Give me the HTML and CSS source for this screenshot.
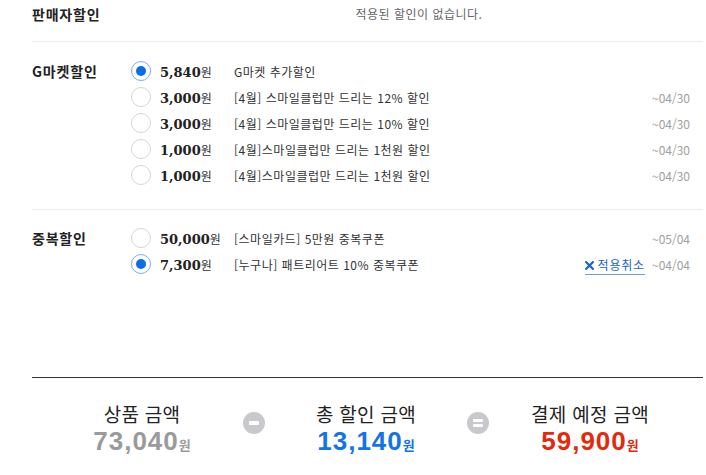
FILE: index.html
```html
<!DOCTYPE html>
<html lang="ko">
<head>
<meta charset="utf-8">
<link rel="stylesheet" href="styles.css">
</head>
<body>
<div class="page">
  <section class="sec head">
    <h2 class="sec-title">판매자할인</h2>
    <p class="empty">적용된 할인이 없습니다.</p>
  </section>

  <section class="sec group">
    <h2 class="sec-title row-title">G마켓할인</h2>
    <ul class="opts">
      <li class="opt"><span class="radio on"></span><span class="amt"><b>5,840</b>원</span><span class="desc">G마켓 추가할인</span></li>
      <li class="opt"><span class="radio"></span><span class="amt"><b>3,000</b>원</span><span class="desc">[4월] 스마일클럽만 드리는 12% 할인</span><span class="date">~04/30</span></li>
      <li class="opt"><span class="radio"></span><span class="amt"><b>3,000</b>원</span><span class="desc">[4월] 스마일클럽만 드리는 10% 할인</span><span class="date">~04/30</span></li>
      <li class="opt"><span class="radio"></span><span class="amt"><b>1,000</b>원</span><span class="desc">[4월]스마일클럽만 드리는 1천원 할인</span><span class="date">~04/30</span></li>
      <li class="opt"><span class="radio"></span><span class="amt"><b>1,000</b>원</span><span class="desc">[4월]스마일클럽만 드리는 1천원 할인</span><span class="date">~04/30</span></li>
    </ul>
  </section>

  <section class="sec group last">
    <h2 class="sec-title row-title">중복할인</h2>
    <ul class="opts">
      <li class="opt"><span class="radio"></span><span class="amt"><b>50,000</b>원</span><span class="desc">[스마일카드] 5만원 중복쿠폰</span><span class="date">~05/04</span></li>
      <li class="opt"><span class="radio on"></span><span class="amt"><b>7,300</b>원</span><span class="desc">[누구나] 패트리어트 10% 중복쿠폰</span><a class="cancel" href="#"><svg class="x" width="9" height="9" viewBox="0 0 9 9"><path d="M1.2 1.2 L7.8 7.8 M7.8 1.2 L1.2 7.8" stroke="#1763cf" stroke-width="2.2" stroke-linecap="square"/></svg>적용취소</a><span class="date">~04/04</span></li>
    </ul>
  </section>

  <section class="summary">
    <div class="sum-item">
      <div class="sum-label">상품 금액</div>
      <div class="sum-val gray">73,040<small>원</small></div>
    </div>
    <span class="sign minus"></span>
    <div class="sum-item">
      <div class="sum-label">총 할인 금액</div>
      <div class="sum-val blue">13,140<small>원</small></div>
    </div>
    <span class="sign equals"></span>
    <div class="sum-item">
      <div class="sum-label">결제 예정 금액</div>
      <div class="sum-val red">59,900<small>원</small></div>
    </div>
  </section>
</div>
</body>
</html>
```

FILE: styles.css
```css
* { box-sizing: border-box; }

body {
  margin: 0;
  background: #fff;
  font-family: "Noto Sans CJK KR", "Noto Sans", sans-serif;
  color: #333;
}

.page {
  margin-left: 32px;
  width: 671px;
}

.sec {
  display: grid;
  grid-template-columns: 99px 1fr;
  border-bottom: 1px solid #ececec;
}

.head {
  height: 42px;
  align-items: start;
}

.sec-title {
  margin: 0;
  font-size: 14px;
  font-weight: 700;
  line-height: 28px;
  color: #222;
  letter-spacing: 0.8px;
}

.empty {
  margin: 0;
  text-align: center;
  font-size: 12px;
  line-height: 28px;
  color: #666;
  letter-spacing: 0.5px;
  padding-left: 4px;
}

.group {
  padding: 16px 0 21px;
}

.group.last {
  border-bottom: none;
  padding: 15px 0 100px;
}

.row-title {
  line-height: 26px;
}

.opts {
  list-style: none;
  margin: 0;
  padding: 0;
}

.opt {
  display: flex;
  align-items: center;
  height: 26px;
  padding-right: 13px;
}

.radio {
  flex: none;
  width: 20px;
  height: 20px;
  border-radius: 50%;
  border: 1px solid #d6d6d6;
  margin-right: 9px;
  display: flex;
  align-items: center;
  justify-content: center;
}

.radio.on {
  border-color: #80abe6;
}

.radio.on::after {
  content: "";
  width: 10px;
  height: 10px;
  border-radius: 50%;
  background: #0a6de6;
}

.amt {
  flex: none;
  width: 74px;
  font-size: 12px;
  color: #333;
}

.amt b {
  font-family: "DejaVu Serif", serif;
  font-size: 13px;
  font-weight: 700;
  color: #222;
}

.desc {
  flex: 1;
  font-size: 12px;
  color: #333;
  letter-spacing: 0.5px;
}

.date {
  font-size: 12px;
  color: #a0a0a0;
}

.cancel {
  display: flex;
  align-items: center;
  gap: 4px;
  margin-right: 7px;
  font-size: 12px;
  line-height: 16px;
  letter-spacing: 0.8px;
  color: #2066c8;
  text-decoration: none;
  border-bottom: 1px solid #6b9be0;
  padding-bottom: 1px;
  margin-top: 4px;
}

.x {
  display: block;
}

.summary {
  border-top: 1px solid #333;
  padding: 23px 0 0 20px;
  display: grid;
  grid-template-columns: 180px 22px 180px 22px 180px;
  column-gap: 11px;
}

.sum-item {
  text-align: center;
}

.sum-label {
  font-size: 19px;
  line-height: 26px;
  color: #222;
  letter-spacing: 0.3px;
}

.sum-val {
  font-family: "Liberation Sans", Arial, sans-serif;
  font-weight: 700;
  font-size: 26px;
  line-height: 28px;
  letter-spacing: 1px;
}

.sum-val small {
  font-family: "Noto Sans CJK KR", sans-serif;
  font-size: 13px;
  font-weight: 700;
  letter-spacing: 0;
}

.gray { color: #9a9a9a; }
.blue { color: #1274e6; }
.red { color: #e4290d; }

.sign {
  align-self: start;
  margin-top: 11px;
  width: 22px;
  height: 22px;
  border-radius: 50%;
  background: #c9c9cd;
  position: relative;
}

.minus::after {
  content: "";
  position: absolute;
  left: 6px;
  top: 9px;
  width: 10px;
  height: 4px;
  border-radius: 1px;
  background: #fff;
}

.equals::before,
.equals::after {
  content: "";
  position: absolute;
  left: 6px;
  width: 10px;
  height: 3px;
  background: #fff;
  border-radius: 1px;
}

.equals::before { top: 7px; }
.equals::after { top: 12px; }
```
